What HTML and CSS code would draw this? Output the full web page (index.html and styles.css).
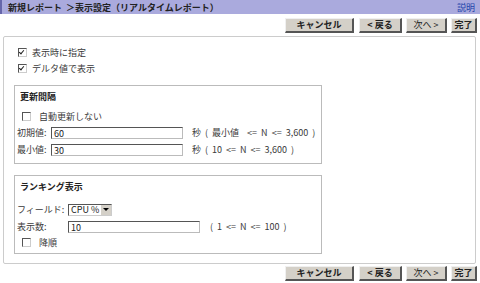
FILE: index.html
```html
<!DOCTYPE html>
<html lang="ja">
	<head>
		<meta charset="utf-8">
		<title>新規レポート</title>
		<link rel="stylesheet" href="styles.css">
	</head>
	<body>
		<div class="titlebar">
			<span class="crumb">新規レポート&nbsp; ＞表示設定（リアルタイムレポート）</span>
			<a class="help" href="#">説明</a>
		</div>
		<div class="buttons">
			<button class="btn wide bold">キャンセル</button>
			<button class="btn back bold">&lt; 戻る</button>
			<button class="btn">次へ &gt;</button>
			<button class="btn small bold">完了</button>
		</div>
		<main class="panel">
			<label class="check"><span class="box on"></span>表示時に指定</label>
			<label class="check"><span class="box on"></span>デルタ値で表示</label>

			<section class="group first">
				<h2>更新間隔</h2>
				<label class="check inner"><span class="box"></span>自動更新しない</label>
				<div class="row">
					<span class="lbl">初期値:</span>
					<span class="field">60</span>
					<span class="note">秒 ( 最小値&nbsp; &lt;= N &lt;= 3,600 )</span>
				</div>
				<div class="row">
					<span class="lbl">最小値:</span>
					<span class="field">30</span>
					<span class="note">秒 ( 10 &lt;= N &lt;= 3,600 )</span>
				</div>
			</section>

			<section class="group second">
				<h2>ランキング表示</h2>
				<div class="row">
					<span class="lbl wide">フィールド:</span>
					<span class="select"><span class="value">CPU %</span><span class="arrow"></span></span>
				</div>
				<div class="row">
					<span class="lbl wide">表示数:</span>
					<span class="field">10</span>
					<span class="note">( 1 &lt;= N &lt;= 100 )</span>
				</div>
				<label class="check inner"><span class="box"></span>降順</label>
			</section>
		</main>
		<div class="buttons bottom">
			<button class="btn wide bold">キャンセル</button>
			<button class="btn back bold">&lt; 戻る</button>
			<button class="btn">次へ &gt;</button>
			<button class="btn small bold">完了</button>
		</div>
	</body>
</html>
```

FILE: styles.css
```css
body {
	margin: 0;
	width: 480px;
	height: 283px;
	background: #fff;
	font-family: "Noto Sans CJK JP", "Noto Sans", sans-serif;
	font-size: 9px;
	color: #3a3a3a;
	overflow: hidden;
}

.titlebar {
	height: 14px;
	display: flex;
	align-items: center;
	justify-content: space-between;
	background: #aaaadd;
	border-left: 2px solid #6666aa;
	padding: 0 5px 0 6px;
}

.crumb {
	font-weight: bold;
	color: #222;
}

.help {
	color: #2244aa;
	text-decoration: none;
}

.buttons {
	display: flex;
	justify-content: flex-end;
	gap: 4px;
	padding: 4px 3px 0 0;
	height: 15px;
}

.buttons.bottom {
	padding-top: 2px;
}

.btn {
	font: inherit;
	color: #222;
	background: #d4d0c8;
	border: none;
	border-right: 2px solid #555;
	border-bottom: 2px solid #555;
	border-top: 1px solid #f0f0f0;
	border-left: 1px solid #f0f0f0;
	padding: 0;
	width: 41px;
	height: 15px;
	line-height: 12px;
	white-space: nowrap;
}

.btn.bold {
	font-weight: bold;
}

.btn.wide {
	width: 69px;
	margin-right: 1px;
}

.btn.back {
	width: 43px;
}

.btn.small {
	width: 26px;
}

.panel {
	margin: 3px 4px 0 3px;
	height: 228px;
	box-sizing: border-box;
	border: 1px solid #ccc;
	border-radius: 2px;
	padding: 7px 0 0 10px;
	display: flex;
	flex-direction: column;
}

.check {
	display: flex;
	align-items: center;
	gap: 5px;
	height: 16px;
	flex-shrink: 0;
	padding-left: 4px;
}

.box {
	width: 7px;
	height: 7px;
	border: 1px solid #555;
	border-right-color: #ccc;
	border-bottom-color: #ccc;
	position: relative;
}

.box.on::after {
	content: "";
	position: absolute;
	left: 1px;
	top: 0;
	width: 2px;
	height: 4px;
	border-right: 1.5px solid #222;
	border-bottom: 1.5px solid #222;
	transform: rotate(40deg);
}

.group {
	width: 308px;
	flex-shrink: 0;
	box-sizing: border-box;
	border: 1px solid #bbb;
	padding: 5px 0 0 2px;
}

.group.first {
	margin-top: 9px;
	height: 79px;
}

.group.second {
	margin-top: 11px;
	height: 79px;
}

h2 {
	margin: 0 0 5px 3px;
	font-size: 9px;
	font-weight: bold;
	color: #222;
	height: 12px;
	line-height: 12px;
}

.second h2 {
	margin-bottom: 8px;
}

.check.inner {
	padding-left: 5px;
	gap: 8px;
	height: 16px;
}

.second .check.inner {
	height: 14px;
}

.row {
	display: flex;
	align-items: center;
	height: 17px;
}

.lbl {
	width: 34px;
}

.lbl.wide {
	width: 51px;
}

.field {
	width: 132px;
	height: 12px;
	box-sizing: border-box;
	border: 1px solid #bbb;
	border-top-color: #555;
	border-left-color: #555;
	padding-left: 2px;
	line-height: 11px;
	color: #222;
}

.note {
	margin-left: 9px;
	word-spacing: 2px;
	white-space: nowrap;
}

.second .note {
	margin-left: 10px;
}

.select {
	display: flex;
	align-items: center;
	width: 44px;
	height: 12px;
	box-sizing: border-box;
	border: 1px solid #555;
	border-right-color: #ccc;
	border-bottom-color: #ccc;
	padding-left: 2px;
	color: #222;
	white-space: nowrap;
}

.arrow {
	width: 10px;
	height: 10px;
	margin-left: auto;
	flex-shrink: 0;
	background: #d4d0c8;
	position: relative;
}

.arrow::after {
	content: "";
	position: absolute;
	left: 2px;
	top: 3px;
	border-left: 3px solid transparent;
	border-right: 3px solid transparent;
	border-top: 3px solid #000;
}
```
